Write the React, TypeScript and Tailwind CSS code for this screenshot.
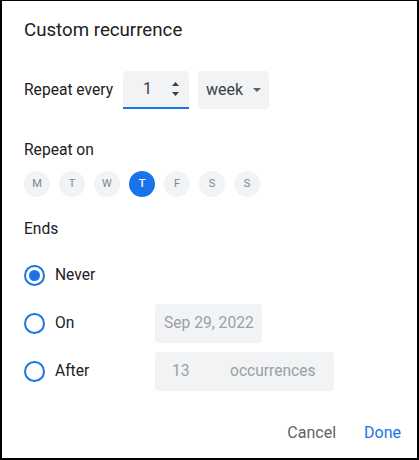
import React from "react";

const days = ["M", "T", "W", "T", "F", "S", "S"];

function Radio({ checked }: { checked?: boolean }) {
  return (
    <div className="w-[21px] h-[21px] rounded-full border-2 border-[#1a73e8] flex items-center justify-center shrink-0">
      {checked && <div className="w-[11px] h-[11px] rounded-full bg-[#1a73e8]" />}
    </div>
  );
}

export default function App() {
  return (
    <div
      className="w-[419px] h-[460px] bg-white border-t border-l-2 border-r-2 border-b-2 border-black flex flex-col pl-[22px] text-[#3c4043]"
      style={{ fontFamily: "Roboto, 'Noto Sans', sans-serif" }}
    >
      <div className="pt-[17px] h-[41px] leading-[24px] text-[18.7px] text-[#202124]">Custom recurrence</div>

      <div className="mt-[29px] flex items-center h-[38px]">
        <span className="text-[15.6px] leading-[20px] w-[99px] text-[#202124]">Repeat every</span>
        <div className="w-[66px] h-[38px] bg-[#f1f3f4] rounded-t-[4px] border-b-2 border-[#1a73e8] flex items-center relative">
          <span className="text-[16px] ml-[20px] text-[#3c4043]">1</span>
          <div className="absolute right-[6px] top-0 bottom-0 w-[16px] flex flex-col items-center justify-center gap-[6px]">
            <svg width="7" height="4" viewBox="0 0 7 4"><path d="M0 4 L3.5 0 L7 4 Z" fill="#3c4043" /></svg>
            <svg width="7" height="4" viewBox="0 0 7 4"><path d="M0 0 L3.5 4 L7 0 Z" fill="#3c4043" /></svg>
          </div>
        </div>
        <div className="ml-[9px] w-[71px] h-[38px] bg-[#f1f3f4] rounded-[4px] flex items-center pl-[8px]">
          <span className="text-[16px] text-[#3c4043]">week</span>
          <svg className="ml-[10px]" width="8" height="4" viewBox="0 0 8 4"><path d="M0 0 L4 4 L8 0 Z" fill="#5f6368" /></svg>
        </div>
      </div>

      <div className="mt-[31px] h-[20px] leading-[20px] text-[15.6px] text-[#202124]">Repeat on</div>

      <div className="mt-[11px] flex gap-[9px]">
        {days.map((d, i) => (
          <div
            key={i}
            className={
              i === 3
                ? "w-[26px] h-[26px] rounded-full bg-[#1a73e8] text-white flex items-center justify-center text-[11px] font-medium"
                : "w-[26px] h-[26px] rounded-full bg-[#f1f3f4] text-[#80868b] flex items-center justify-center text-[11px]"
            }
          >
            {d}
          </div>
        ))}
      </div>

      <div className="mt-[22px] h-[20px] leading-[20px] text-[15.6px] text-[#202124]">Ends</div>

      <div className="mt-[17px] flex flex-col gap-[9px]">
        <div className="h-[39px] flex items-center">
          <Radio checked />
          <span className="ml-[10px] text-[15.6px] text-[#202124]">Never</span>
        </div>
        <div className="h-[39px] flex items-center">
          <Radio />
          <span className="ml-[10px] text-[15.6px] text-[#202124] w-[100px]">On</span>
          <div className="w-[107px] h-[39px] bg-[#f1f3f4] rounded-[4px] flex items-center pl-[9px] text-[15.6px] text-[#9aa0a6]">
            Sep 29, 2022
          </div>
        </div>
        <div className="h-[39px] flex items-center">
          <Radio />
          <span className="ml-[10px] text-[15.6px] text-[#202124] w-[100px]">After</span>
          <div className="w-[179px] h-[39px] bg-[#f1f3f4] rounded-[4px] flex items-center text-[15.6px] text-[#9aa0a6]">
            <span className="ml-[17px] w-[58px]">13</span>
            <span>occurrences</span>
          </div>
        </div>
      </div>

      <div className="mt-[24px] h-[36px] flex items-center justify-end pr-[16px] gap-[28px] text-[16px]">
        <span className="text-[#5f6368]">Cancel</span>
        <span className="text-[#1a73e8]">Done</span>
      </div>
    </div>
  );
}
